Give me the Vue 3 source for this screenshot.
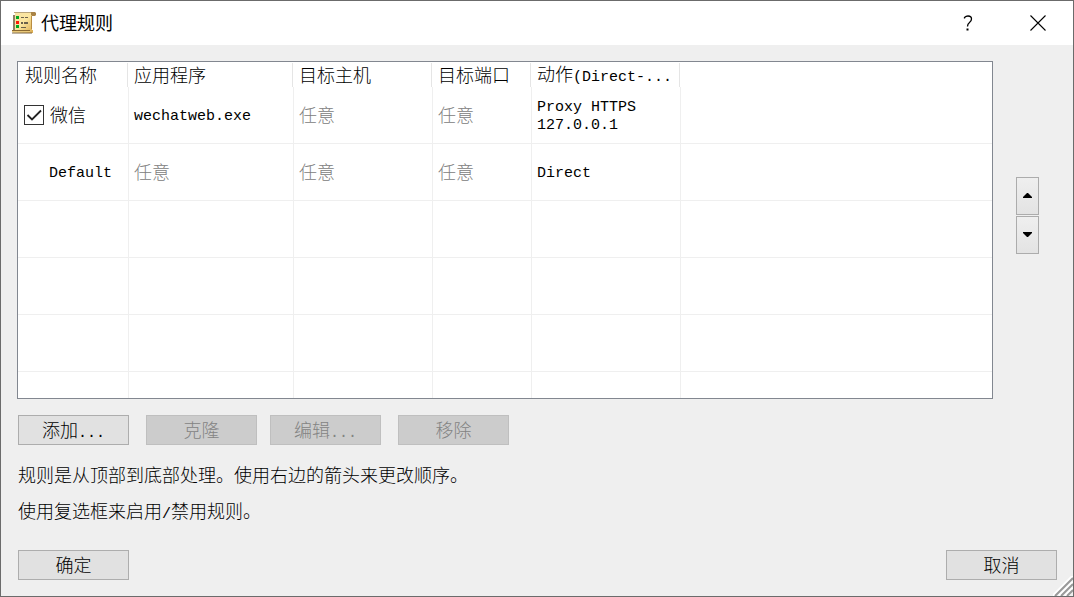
<script setup>
import { ref } from 'vue'

const columns = [
    { key: 'name', label: '规则名称' },
    { key: 'app', label: '应用程序' },
    { key: 'host', label: '目标主机' },
    { key: 'port', label: '目标端口' },
    { key: 'action', label: '动作(Direct-...' }
]

const rules = ref([
    { id: 1, name: '微信', enabled: true, app: 'wechatweb.exe', host: '任意', port: '任意', action: 'Proxy HTTPS\n127.0.0.1' },
    { id: 2, name: 'Default', app: '任意', host: '任意', port: '任意', action: 'Direct' }
])

const actions = [
    { label: '添加...', disabled: false },
    { label: '克隆', disabled: true },
    { label: '编辑...', disabled: true },
    { label: '移除', disabled: true }
]

const hints = [
    '规则是从顶部到底部处理。使用右边的箭头来更改顺序。',
    '使用复选框来启用/禁用规则。'
]

// latin runs use a half-width monospace face
const split = (text) => text.match(/[\x00-\x7f]+|[^\x00-\x7f]+/g).map(t => ({ text: t, latin: t.charCodeAt(0) < 128 }))
</script>

<template>
    <div class="dialog">
        <header class="titlebar">
            <svg class="app-icon" width="24" height="24" viewBox="0 0 24 24">
                <defs>
                    <linearGradient id="paper" x1="0" y1="0" x2="1" y2="1">
                        <stop offset="0" stop-color="#f7e3a4" />
                        <stop offset=".5" stop-color="#fbe6a0" />
                        <stop offset="1" stop-color="#d9a94e" />
                    </linearGradient>
                </defs>
                <path d="M3 1h17v18h1v3H1v-3h2z" fill="url(#paper)" />
                <path d="M2 4v15" stroke="#8d8064" stroke-width="2" />
                <path d="M2 1.500h17" stroke="#b8a47a" />
                <path d="M19 1h4l1 1v2l-1 1h-3l-1-1z" fill="#a98346" />
                <path d="M19.500 5v13" stroke="#b98d42" />
                <path d="M0 19h18v1H0z" fill="#8b6930" />
                <path d="M0 20h18v1H0z" fill="#e9c878" />
                <path d="M0 21.500h20v1H0z" fill="#7d6540" />
                <path d="M9 6h3v1H9zM13 6h3v1h-3zM9 11h2v2H9zM12 11h4v2h-4zM9 16h5v1H9z" fill="#6a604a" />
                <path d="M4 5h3v3H4zM4 14h3v3H4z" fill="#00a820" />
                <path d="M4 10h3v3H4z" fill="#ff1808" />
            </svg>
            <h1>代理规则</h1>
            <button class="caption" aria-label="帮助">
                <svg width="16" height="18" viewBox="0 0 16 18">
                    <path d="M4.500 4.500V3.500Q6 2 8 2Q11.500 2 11.500 5Q11.500 7 9.500 8.500Q7.500 10 7.500 12.500" fill="none" stroke="#000" stroke-width="1.300" />
                    <rect x="6.500" y="14.500" width="2" height="2" />
                </svg>
            </button>
            <button class="caption" aria-label="关闭">
                <svg width="16" height="16" viewBox="0 0 16 16">
                    <path d="M.5.5l15 15M15.500.5l-15 15" stroke="#000" stroke-width="1.100" />
                </svg>
            </button>
        </header>

        <main class="content">
            <div class="list-row">
                <div class="list">
                    <table>
                        <colgroup>
                            <col v-for="c in columns" :key="c.key" :class="'col-' + c.key">
                            <col>
                        </colgroup>
                        <thead>
                            <tr>
                                <th v-for="c in columns" :key="c.key">
                                    <span v-for="(p, i) in split(c.label)" :key="i" :class="{ latin: p.latin }">{{ p.text }}</span>
                                </th>
                                <td></td>
                            </tr>
                        </thead>
                        <tbody>
                            <tr v-for="rule in rules" :key="rule.id">
                                <td class="name">
                                    <label v-if="rule.enabled !== undefined">
                                        <input v-model="rule.enabled" type="checkbox"><span>{{ rule.name }}</span>
                                    </label>
                                    <span v-else class="latin">{{ rule.name }}</span>
                                </td>
                                <td v-for="c in columns.slice(1)" :key="c.key" :class="{ any: rule[c.key] === '任意' }">
                                    <span :class="{ latin: rule[c.key] !== '任意' }">{{ rule[c.key] }}</span>
                                </td>
                                <td></td>
                            </tr>
                            <tr v-for="n in 4" :key="'empty' + n">
                                <td v-for="m in 6" :key="m"></td>
                            </tr>
                        </tbody>
                    </table>
                </div>
                <div class="order">
                    <button aria-label="上移">
                        <svg width="9" height="5" viewBox="0 0 9 5"><path d="M0 5V4l4-4h1l4 4v1z" /></svg>
                    </button>
                    <button aria-label="下移">
                        <svg width="9" height="5" viewBox="0 0 9 5"><path d="M0 0v1l4 4h1l4-4V0z" /></svg>
                    </button>
                </div>
            </div>

            <div class="actions">
                <button v-for="a in actions" :key="a.label" class="btn" :disabled="a.disabled">
                    <span v-for="(p, i) in split(a.label)" :key="i" :class="{ latin: p.latin }">{{ p.text }}</span>
                </button>
            </div>

            <div class="hints">
                <p v-for="h in hints" :key="h">
                    <span v-for="(p, i) in split(h)" :key="i" :class="{ latin: p.latin }">{{ p.text }}</span>
                </p>
            </div>

            <footer>
                <button class="btn">确定</button>
                <button class="btn">取消</button>
            </footer>
        </main>

        <svg class="grip" width="20" height="20" viewBox="0 0 20 20">
            <path d="M0 20L20 0M6 20L20 6M12 20l8-8" stroke="#fff" stroke-width="3" />
            <path d="M2 20L20 2M8 20L20 8M14 20l6-6" stroke="#999" stroke-width="2" />
        </svg>
    </div>
</template>

<style>
body {
    margin: 0;
}
</style>

<style scoped>
.dialog {
    position: relative;
    display: flex;
    flex-direction: column;
    box-sizing: border-box;
    min-height: 100vh;
    border: 1px solid #6b6b6b;
    background: #efefef;
    color: #000;
    font-family: "Noto Sans CJK SC", sans-serif;
    font-size: 18px;
    font-weight: 300;
    line-height: 18px;
}

.latin {
    font-family: "Liberation Mono", monospace;
    font-size: 15px;
    line-height: 10px;
    white-space: pre-line;
}

button {
    font: inherit;
    color: inherit;
}

.titlebar {
    display: flex;
    align-items: center;
    height: 44px;
    padding-left: 11px;
    background: #fff;
}

.titlebar h1 {
    flex: 1;
    margin: 0 0 0 5px;
    padding-bottom: 2px;
    font-size: 18px;
    font-weight: 400;
}

.caption {
    display: flex;
    align-items: center;
    justify-content: center;
    width: 70px;
    height: 44px;
    padding: 0;
    border: none;
    background: none;
}

.caption:hover {
    background: #e5e5e5;
}

.content {
    display: flex;
    flex: 1;
    flex-direction: column;
    padding: 16px;
}

.list-row {
    display: flex;
    align-items: center;
    gap: 23px;
    padding-right: 18px;
}

.list {
    flex: 1;
    border: 1px solid #828790;
    background: #fff;
}

table {
    width: 100%;
    table-layout: fixed;
    border-collapse: separate;
    border-spacing: 0;
}

.col-name {
    width: 111px;
}

.col-app {
    width: 165px;
}

.col-host {
    width: 139px;
}

.col-port {
    width: 99px;
}

.col-action {
    width: 149px;
}

th {
    box-sizing: border-box;
    height: 25px;
    padding: 0 0 2px 5px;
    background: linear-gradient(#e5e5e5, #e5e5e5) right 1px top 1px / 1px 100% no-repeat;
    font-weight: 300;
    text-align: left;
    white-space: nowrap;
}

th:first-child {
    padding-left: 7px;
}

tbody td {
    box-sizing: border-box;
    height: 57px;
    padding: 0 0 2px 5px;
    border-right: 1px solid #efefef;
    border-bottom: 1px solid #efefef;
}

tbody td:last-child {
    border-right: none;
}

tbody tr:last-child td {
    height: 26px;
    border-bottom: none;
}

tbody .latin {
    display: block;
    padding-top: 6px;
    line-height: 18px;
}

.any {
    color: #808080;
}

.name .latin {
    padding-left: 26px;
}

label {
    display: flex;
    align-items: center;
    gap: 6px;
}

input {
    appearance: none;
    box-sizing: border-box;
    width: 20px;
    height: 20px;
    margin: 2px 0 0 1px;
    border: 1px solid #333;
    background: #fff;
}

input:checked {
    background: #fff url("data:image/svg+xml,%3Csvg xmlns='http://www.w3.org/2000/svg' viewBox='0 0 18 18'%3E%3Cpath d='M2.500 9l4.500 4.500L16 4.500' fill='none' stroke='%23222' stroke-width='1.800'/%3E%3C/svg%3E") center / 18px no-repeat;
}

.order {
    display: flex;
    flex-direction: column;
    gap: 1px;
    padding-bottom: 30px;
}

.order button {
    display: flex;
    align-items: center;
    justify-content: center;
    width: 23px;
    height: 38px;
    padding: 0;
    border: 1px solid #acacac;
    background: linear-gradient(#efefef, #e3e3e3);
}

.actions,
.hints,
footer {
    padding-left: 1px;
}

.actions {
    display: flex;
    gap: 17px;
    margin-top: 16px;
}

.btn {
    width: 111px;
    height: 30px;
    padding: 0 0 2px;
    border: 1px solid #adadad;
    background: #e1e1e1;
}

.btn:disabled {
    border-color: #bfbfbf;
    background: #ccc;
    color: #838383;
}

.actions .btn:nth-child(3) {
    margin-left: -4px;
}

.hints {
    margin: 11px 0 20px;
}

.hints p {
    margin: 0;
    line-height: 36px;
}

footer {
    display: flex;
    justify-content: space-between;
    margin-top: auto;
}

.grip {
    position: absolute;
    right: 0;
    bottom: 0;
}
</style>
